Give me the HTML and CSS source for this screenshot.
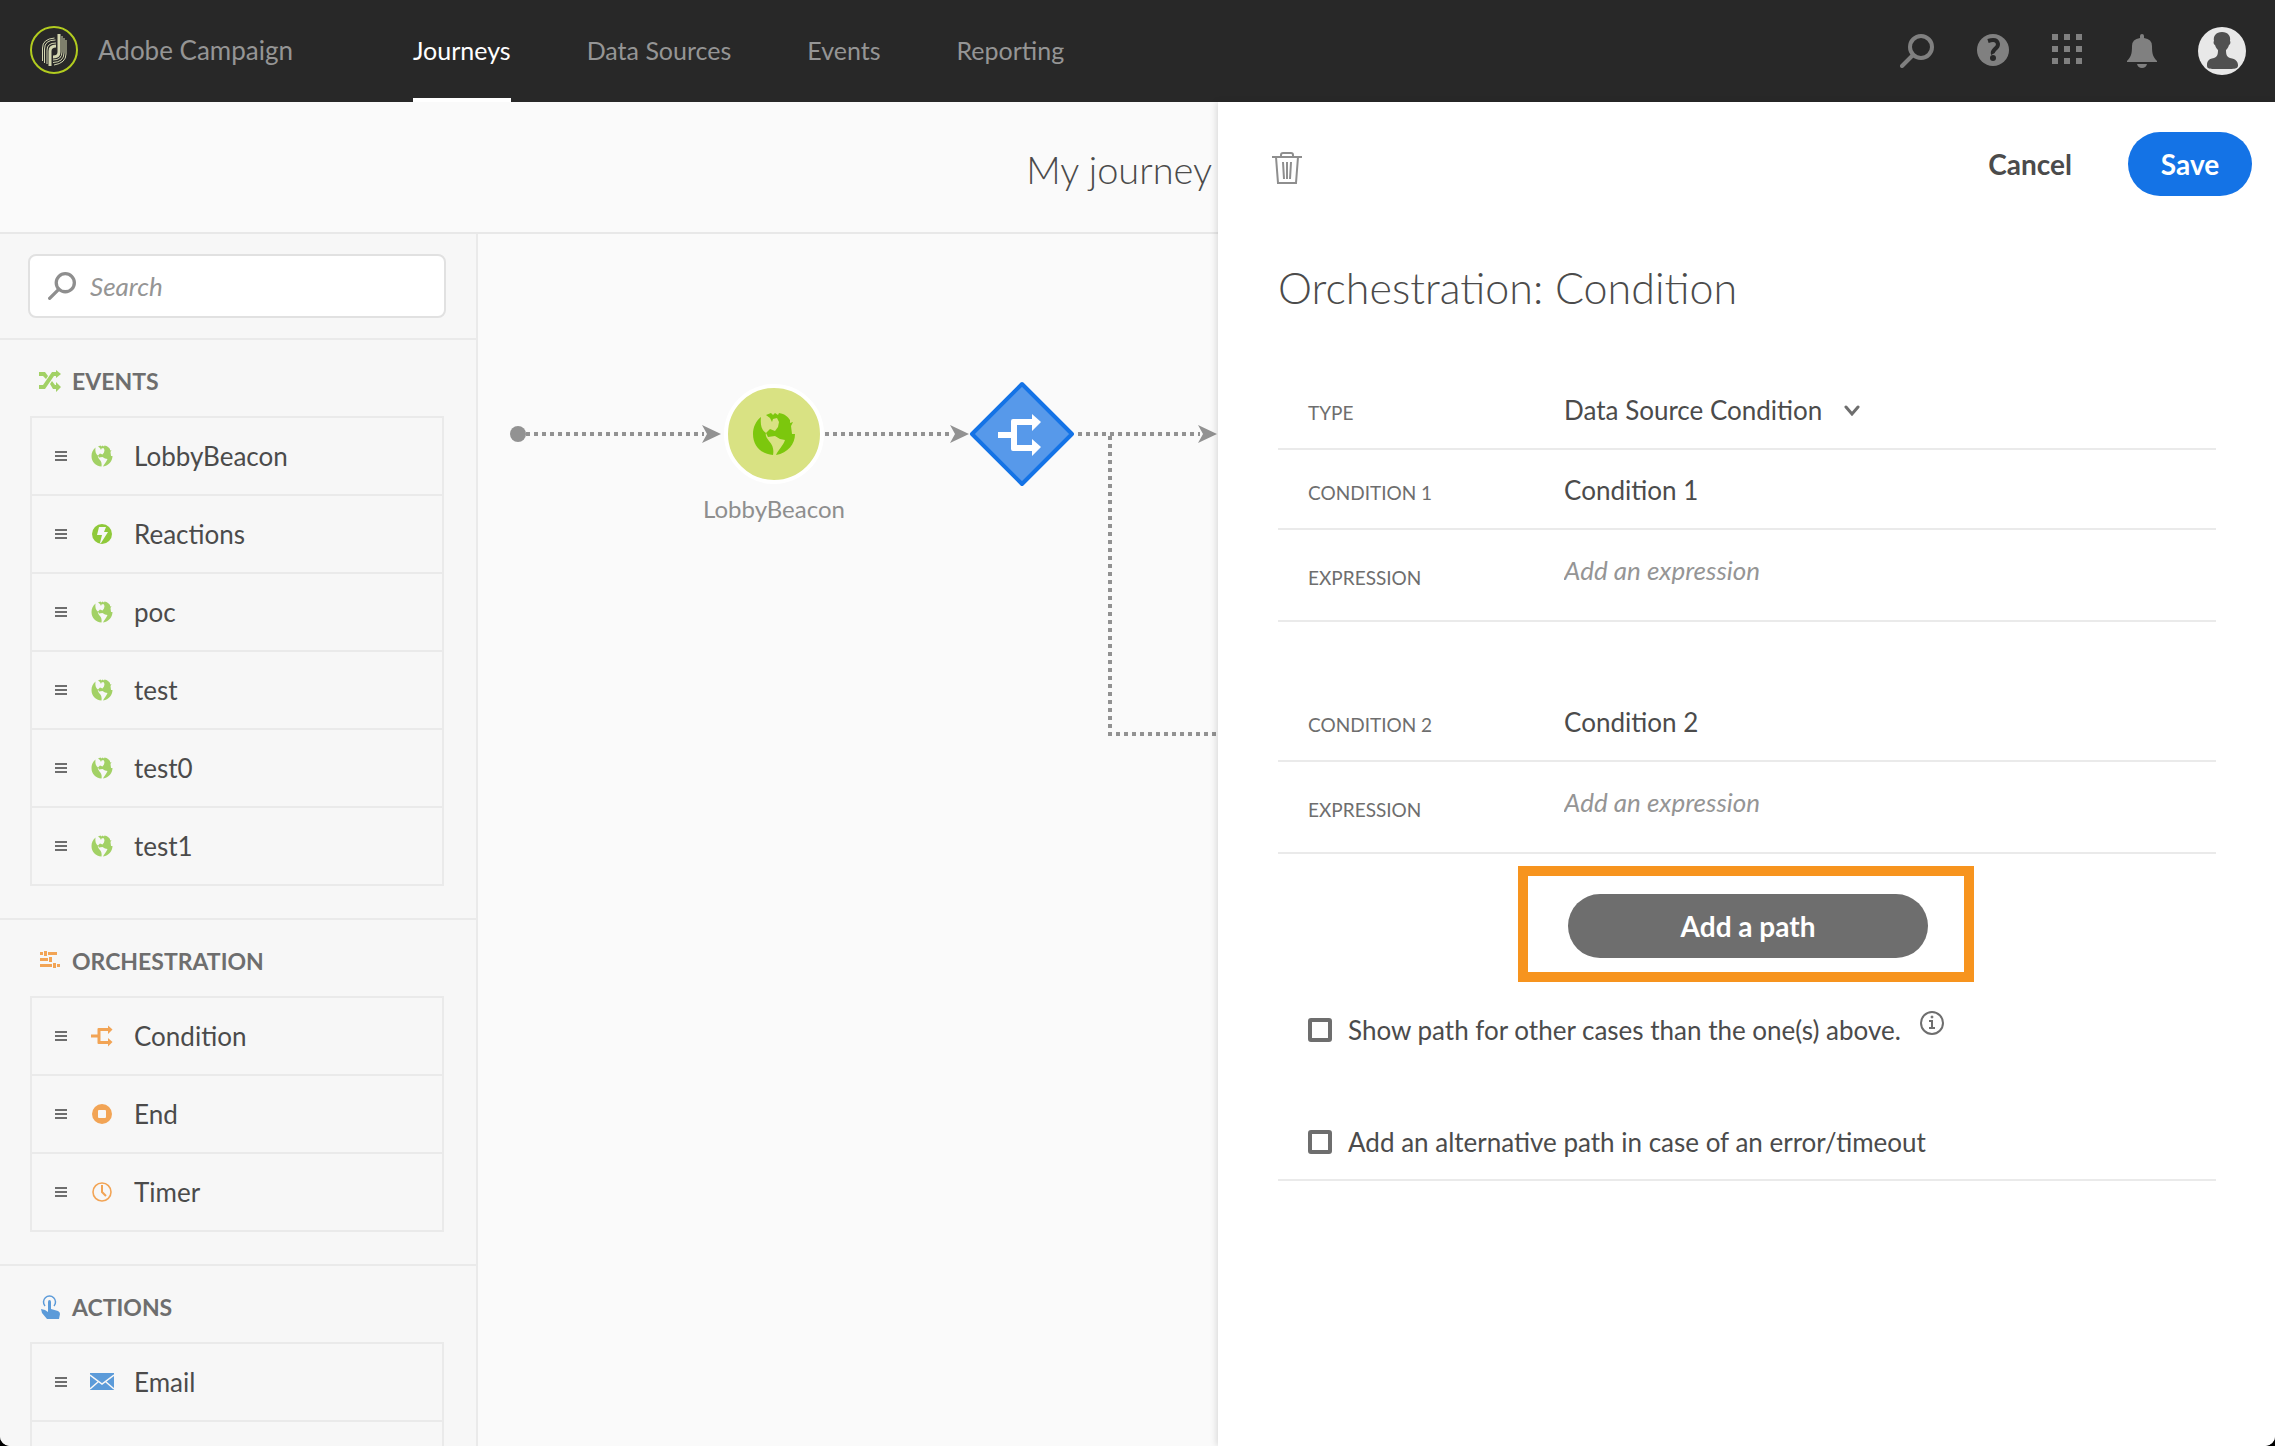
FILE: index.html
```html
<!DOCTYPE html>
<html lang="en">
<head>
<meta charset="utf-8">
<title>Adobe Campaign</title>
<link rel="stylesheet" href="styles.css">
</head>
<body>
<svg class="defs" aria-hidden="true">
  <symbol id="globe" viewBox="0 0 44 44">
    <path d="M9 5C4 9 1 15 1 22c0 12 8 20 20 21 1-5 0-10-4-14-2-3-4-5-3-8-4-3-6-7-5-16z"/>
    <path d="M14 3l5-2 2 2 2-2 3 2 1-2c6 1 9 4 11 7l0 3 3-1-2 4 1 8h3c0 10-7 19-19 21 2-5 7-9 9-15l-5-1-5-3-7 1-2-4 4-4 5 2 3-4 1-5-2-4-4 1-1 3-2-4z"/>
  </symbol>
  <symbol id="branch" viewBox="0 0 44 42">
    <path d="M0 18h13V7q0-2 2-2h19V0l9 8-9 9v-6H19v20h15v-6l9 8-9 9v-5H15q-2 0-2-2V24H0z"/>
  </symbol>
  <symbol id="grip" viewBox="0 0 12 10"><path d="M0 0h12v2H0zM0 4h12v2H0zM0 8h12v2H0z"/></symbol>
  <symbol id="lens" viewBox="0 0 34 34"><circle cx="21" cy="13" r="11" fill="none" stroke="currentColor" stroke-width="4"/><path d="M13 21L2 32" stroke="currentColor" stroke-width="4" stroke-linecap="round"/></symbol>
</svg>

<header class="topbar">
  <a class="brand" href="#">
    <svg class="logo" viewBox="0 0 48 48" fill="none">
      <circle cx="24" cy="24" r="23" stroke="#b2cc1f" stroke-width="2"/>
      <g stroke="#d3d6b0">
        <path d="M20 40V25q0-5 6-5" stroke-width="3"/>
        <path d="M17 38V24q0-7 9-7M14.500 37V23q0-9 11-9M12.500 35V22q0-9 12-10" stroke-width="1"/>
        <path d="M29 8v18q0 5-6 5" stroke-width="3"/>
        <path d="M32 10v16q0 8-9 8M34 12v15q0 9-11 9.500M36 14v14q0 9-12 11" stroke-width="1"/>
      </g>
    </svg>
    <span>Adobe Campaign</span>
  </a>
  <nav class="nav">
    <a class="nav-link active" href="#">Journeys</a>
    <a class="nav-link" href="#">Data Sources</a>
    <a class="nav-link" href="#">Events</a>
    <a class="nav-link" href="#">Reporting</a>
  </nav>
  <div class="tools">
    <button class="tool" aria-label="Search"><svg width="34" height="34"><use href="#lens"/></svg></button>
    <button class="tool" aria-label="Help"><svg width="34" height="34" viewBox="0 0 34 34"><circle cx="18" cy="16" r="16" fill="currentColor"/><path d="M13 7q9-3 10 3 0 3-3 5-3 3-2 5" fill="none" stroke="#282828" stroke-width="4"/><circle cx="18" cy="24" r="3" fill="#282828"/></svg></button>
    <button class="tool" aria-label="Apps"><svg width="34" height="34" viewBox="0 0 34 34" fill="currentColor"><path d="M2 0h6v6H2zM14 0h6v6h-6zM26 0h6v6h-6zM2 12h6v6H2zM14 12h6v6h-6zM26 12h6v6h-6zM2 24h6v6H2zM14 24h6v6h-6zM26 24h6v6h-6z"/></svg></button>
    <button class="tool" aria-label="Notifications"><svg width="34" height="34" viewBox="0 0 34 34" fill="currentColor"><path d="M15 4V2q0-2 2-2t2 2v2q8 1 8 8c0 8 1 11 5 15v1H2v-1c4-4 5-7 5-15q0-7 8-8zM12 30h10q-1 4-5 4t-5-4z"/></svg></button>
    <button class="tool avatar" aria-label="Account"><svg width="48" height="48" viewBox="0 0 48 48"><circle cx="24" cy="24" r="24" fill="#e8e8e8"/><path d="M24 5c-6 0-9 4-8 9-1 1 0 4 1 4 1 3 2 4 3 5 0 5-1 7-4 8-6 1-7 4-7 7 0 4 1 4 15 4s16 0 16-4c0-3-2-6-8-7-3-1-4-3-4-8 1-1 2-2 3-5 1 0 2-3 1-4 1-5-2-9-8-9z" fill="#505050"/></svg></button>
  </div>
</header>

<main class="workspace">
  <section class="journey">
    <div class="titlebar"><h1>My journey</h1></div>
    <div class="editor">
      <aside class="palette">
        <div class="search-wrap">
          <label class="search">
            <svg width="28" height="28" aria-hidden="true"><use href="#lens"/></svg>
            <input type="search" placeholder="Search" aria-label="Search">
          </label>
        </div>
        <section class="group">
          <h2><svg class="green" width="22" height="22" viewBox="0 0 22 22" fill="currentColor"><path d="M0 2h6l3 4-2 3-3-3H0zM0 15h4L13 2h4V0l5 4-5 4V6h-2L6 19H0zM11 14l2-3 3 4h1v-3l5 5-5 5v-3h-3z"/></svg>EVENTS</h2>
          <ul class="items">
            <li><svg class="grip"><use href="#grip"/></svg><svg class="icon green"><use href="#globe"/></svg>LobbyBeacon</li>
            <li><svg class="grip"><use href="#grip"/></svg><svg class="icon bright" viewBox="0 0 22 22"><circle cx="11" cy="11" r="10"/><path d="M8 4h7l-2 5h4L10 20H9l2-8H6z" fill="#f7f7f7"/></svg>Reactions</li>
            <li><svg class="grip"><use href="#grip"/></svg><svg class="icon green"><use href="#globe"/></svg>poc</li>
            <li><svg class="grip"><use href="#grip"/></svg><svg class="icon green"><use href="#globe"/></svg>test</li>
            <li><svg class="grip"><use href="#grip"/></svg><svg class="icon green"><use href="#globe"/></svg>test0</li>
            <li><svg class="grip"><use href="#grip"/></svg><svg class="icon green"><use href="#globe"/></svg>test1</li>
          </ul>
        </section>
        <section class="group">
          <h2><svg class="orange" width="22" height="22" viewBox="0 0 22 22" fill="currentColor"><path d="M1 2h3v3H1zM5 1h3v5H5zM9 2h9v3H9zM1 8h8v3H1zM10 7h3v5h-3zM1 14h12v3H1zM14 13h3v5h-3zM18 14h3v3h-3z"/></svg>ORCHESTRATION</h2>
          <ul class="items">
            <li><svg class="grip"><use href="#grip"/></svg><svg class="icon orange"><use href="#branch"/></svg>Condition</li>
            <li><svg class="grip"><use href="#grip"/></svg><svg class="icon orange" viewBox="0 0 22 22"><circle cx="11" cy="11" r="10"/><rect x="7" y="7" width="8" height="8" rx="1" fill="#f7f7f7"/></svg>End</li>
            <li><svg class="grip"><use href="#grip"/></svg><svg class="icon orange" viewBox="0 0 22 22"><path d="M11 4v7l4 4" fill="none" stroke="currentColor" stroke-width="2"/><circle cx="11" cy="11" r="9" fill="none" stroke="currentColor" stroke-width="1.6"/></svg>Timer</li>
          </ul>
        </section>
        <section class="group">
          <h2><svg class="blue" width="22" height="24" viewBox="0 0 22 24" fill="currentColor"><path d="M6 11A6 6 0 1 1 15 11" fill="none" stroke="currentColor" stroke-width="1.5"/><path d="M9 7q0-2 1.500-2T12 7v7l7 2q2 1 2 3l-1 5H8l-5-6-1-4 4 1 3 2z"/></svg>ACTIONS</h2>
          <ul class="items">
            <li><svg class="grip"><use href="#grip"/></svg><svg class="icon wide blue" viewBox="0 0 24 24"><path d="M0 3h24v17H0z"/><path d="M0 5l12 9 12-9M0 19l8-7M24 19l-8-7" fill="none" stroke="#f7f7f7" stroke-width="1.500"/></svg>Email</li>
            <li></li>
          </ul>
        </section>
      </aside>
      <div class="canvas">
        <svg class="flow" width="740" height="640" viewBox="478 234 740 640">
          <g fill="none" stroke="#929292" stroke-width="4" stroke-dasharray="4 4">
            <path d="M526 434H704"/><path d="M825 434H952"/><path d="M1078 434H1200"/><path d="M1110 436V732"/><path d="M1108 734H1218"/>
          </g>
          <g fill="#929292">
            <circle cx="518" cy="434" r="8"/>
            <path d="M702 425l19 9-19 9 5-9z"/><path d="M950 425l19 9-19 9 5-9z"/><path d="M1198 425l19 9-19 9 5-9z"/>
          </g>
          <circle cx="774" cy="434" r="48" fill="#d9e283" stroke="#fff" stroke-width="4"/>
          <use href="#globe" x="752" y="412" width="44" height="44" fill="#7cc70d"/>
          <path d="M1022 384l50 50-50 50-50-50z" fill="#5799ea" stroke="#1473e6" stroke-width="4" stroke-linejoin="round"/>
          <use href="#branch" x="998" y="414" width="44" height="42" fill="#fff"/>
          <text class="node-label" x="774" y="518" text-anchor="middle">LobbyBeacon</text>
        </svg>
      </div>
    </div>
  </section>

  <form class="panel">
    <div class="panel-bar">
      <button type="button" class="trash" aria-label="Delete"><svg width="30" height="34" viewBox="0 0 30 34" fill="none" stroke="currentColor" stroke-width="2"><path d="M0 6h30M9 6V4q0-2 2-2h8q2 0 2 2v2M4 6l2 26h18l2-26M11 11l1 17M15 11v17M19 11l-1 17"/></svg></button>
      <button type="button" class="btn cancel">Cancel</button>
      <button type="button" class="btn save">Save</button>
    </div>
    <h2 class="panel-title">Orchestration: Condition</h2>
    <div class="fields">
      <div class="field">
        <label for="type">TYPE</label>
        <span class="picker"><select id="type"><option>Data Source Condition</option></select><svg width="18" height="12" viewBox="0 0 18 12" fill="none" stroke="#6e6e6e" stroke-width="3" stroke-linecap="round"><path d="M3 3l6 7 6-7"/></svg></span>
      </div>
      <div class="field"><label for="c1">CONDITION 1</label><input id="c1" type="text" value="Condition 1"></div>
      <div class="field expr"><label for="e1">EXPRESSION</label><input id="e1" type="text" placeholder="Add an expression"></div>
    </div>
    <div class="fields second">
      <div class="field"><label for="c2">CONDITION 2</label><input id="c2" type="text" value="Condition 2"></div>
      <div class="field expr"><label for="e2">EXPRESSION</label><input id="e2" type="text" placeholder="Add an expression"></div>
    </div>
    <div class="highlight"><button type="button" class="btn add">Add a path</button></div>
    <div class="checks">
      <div class="check"><input type="checkbox" id="other"><label for="other">Show path for other cases than the one(s) above.</label>
        <svg class="info" width="26" height="26" viewBox="0 0 26 26" fill="none" stroke="#6e6e6e" stroke-width="2"><circle cx="13" cy="13" r="11"/><path d="M10 11h3v7M10 18h6"/><circle cx="13" cy="7" r="1" fill="#6e6e6e" stroke-width="1"/></svg></div>
      <div class="check"><input type="checkbox" id="alt"><label for="alt">Add an alternative path in case of an error/timeout</label></div>
    </div>
  </form>
</main>
</body>
</html>
```
FILE: styles.css
```css
* { box-sizing: border-box; }
html { background: #000; }
body {
  margin: 0;
  height: 100vh;
  display: flex;
  flex-direction: column;
  overflow: hidden;
  border-radius: 0 0 10px 10px;
  background: #fafafa;
  color: #4b4b4b;
  font: 26px/32px Lato, "Open Sans", sans-serif;
}
h1, h2, ul { margin: 0; padding: 0; font-weight: 400; }
ul { list-style: none; }
a { color: inherit; text-decoration: none; }
button, input, select { font: inherit; color: inherit; border: 0; background: none; padding: 0; margin: 0; outline: 0; }
.defs { position: absolute; width: 0; height: 0; }
svg { flex: none; }

.topbar {
  flex: none;
  height: 102px;
  display: flex;
  align-items: center;
  padding: 0 29px 0 30px;
  background: #282828;
  color: #959595;
}
.brand { display: flex; align-items: center; gap: 20px; width: 383px; padding-bottom: 2px; }
.logo { width: 48px; height: 48px; }
.nav { display: flex; gap: 76px; align-self: stretch; flex: 1; font-size: 25px; }
.nav-link { display: flex; align-items: center; padding-bottom: 2px; border-bottom: 4px solid transparent; border-top: 4px solid transparent; }
.nav-link.active { color: #fff; border-bottom-color: #fff; }
.tools { display: flex; align-items: center; gap: 41px; color: #808080; }
.tool { display: flex; }
.avatar { margin-left: -2px; }

.workspace { flex: 1; min-height: 0; display: flex; }
.journey { flex: 1; min-width: 0; display: flex; flex-direction: column; }
.titlebar {
  height: 132px;
  flex: none;
  display: flex;
  align-items: center;
  justify-content: flex-end;
  padding: 4px 6px 0 0;
  border-bottom: 2px solid #e8e8e8;
}
h1 { font-size: 38px; line-height: 48px; font-weight: 300; }
.editor { flex: 1; min-height: 0; display: flex; }
.palette { flex: none; width: 478px; background: #f7f7f7; border-right: 2px solid #eaeaea; overflow: hidden; }
.search-wrap { padding: 20px 30px 20px 28px; }
.search {
  display: flex;
  align-items: center;
  gap: 14px;
  height: 64px;
  padding: 0 18px;
  background: #fff;
  border: 2px solid #e1e1e1;
  border-radius: 8px;
  color: #8e8e8e;
}
.search input { flex: 1; min-width: 0; }
::placeholder { color: #959595; font-style: italic; opacity: 1; }
.group { border-top: 2px solid #eaeaea; padding: 0 32px 32px 30px; }
.group h2 {
  display: flex;
  align-items: center;
  gap: 11px;
  height: 76px;
  padding: 6px 0 0 9px;
  font-size: 23px;
  font-weight: 700;
  color: #6e6e6e;
}
.items { border: 2px solid #eaeaea; }
.items li { display: flex; align-items: center; height: 76px; padding-left: 23px; }
.items li + li { height: 78px; border-top: 2px solid #eaeaea; }
.grip { width: 12px; height: 10px; margin-right: 24px; fill: #6e6e6e; }
.icon { width: 22px; height: 22px; margin-right: 21px; fill: currentColor; }
.wide { width: 24px; height: 24px; margin: 0 20px 0 -1px; }
.green { color: #a2d165; fill: currentColor; }
.bright { color: #8fc93a; }
.orange { color: #f2a455; }
.blue { color: #5c9bd9; }
.canvas { flex: 1; min-width: 0; overflow: hidden; }
.flow { display: block; }
.node-label { font-size: 24px; fill: #8e8e8e; }

.panel {
  flex: none;
  width: 46.46%;
  padding: 30px 59px 0 60px;
  background: #fff;
  box-shadow: -2px 0 6px rgba(0, 0, 0, .12);
  z-index: 1;
}
.panel-bar { display: flex; align-items: center; height: 64px; margin: 0 -36px 0 -6px; }
.trash { display: flex; padding-top: 8px; color: #8e8e8e; margin-right: auto; }
.btn { height: 64px; border-radius: 32px; font-size: 28px; font-weight: 700; }
.cancel { margin-right: 56px; }
.save { width: 124px; background: #1473e6; color: #fff; }
.panel-title { margin: 64px 0 54px; font-size: 43px; line-height: 56px; font-weight: 300; }
.field { display: flex; align-items: baseline; height: 80px; padding: 24px 0 0 30px; border-bottom: 2px solid #eaeaea; }
.field label { width: 256px; font-size: 19px; color: #6e6e6e; }
.field input { flex: 1; min-width: 0; height: 32px; }
.expr { height: 92px; align-items: flex-start; }
.expr label { padding-top: 8px; }
.second { margin-top: 60px; }
.picker { display: flex; align-items: center; gap: 20px; }
select { appearance: none; height: 32px; }
.highlight { width: 456px; margin: 12px 0 0 240px; padding: 18px 36px 14px 40px; border: 10px solid #f7941e; }
.add { width: 100%; display: block; background: #6e6e6e; color: #fff; }
.checks { padding: 32px 0 21px 30px; border-bottom: 2px solid #eaeaea; }
.check { display: flex; align-items: center; height: 32px; }
.check + .check { margin-top: 80px; }
.check input { appearance: none; width: 24px; height: 24px; margin-right: 16px; border: 4px solid #6e6e6e; border-radius: 3px; }
.info { margin: -14px 0 0 18px; }
```
